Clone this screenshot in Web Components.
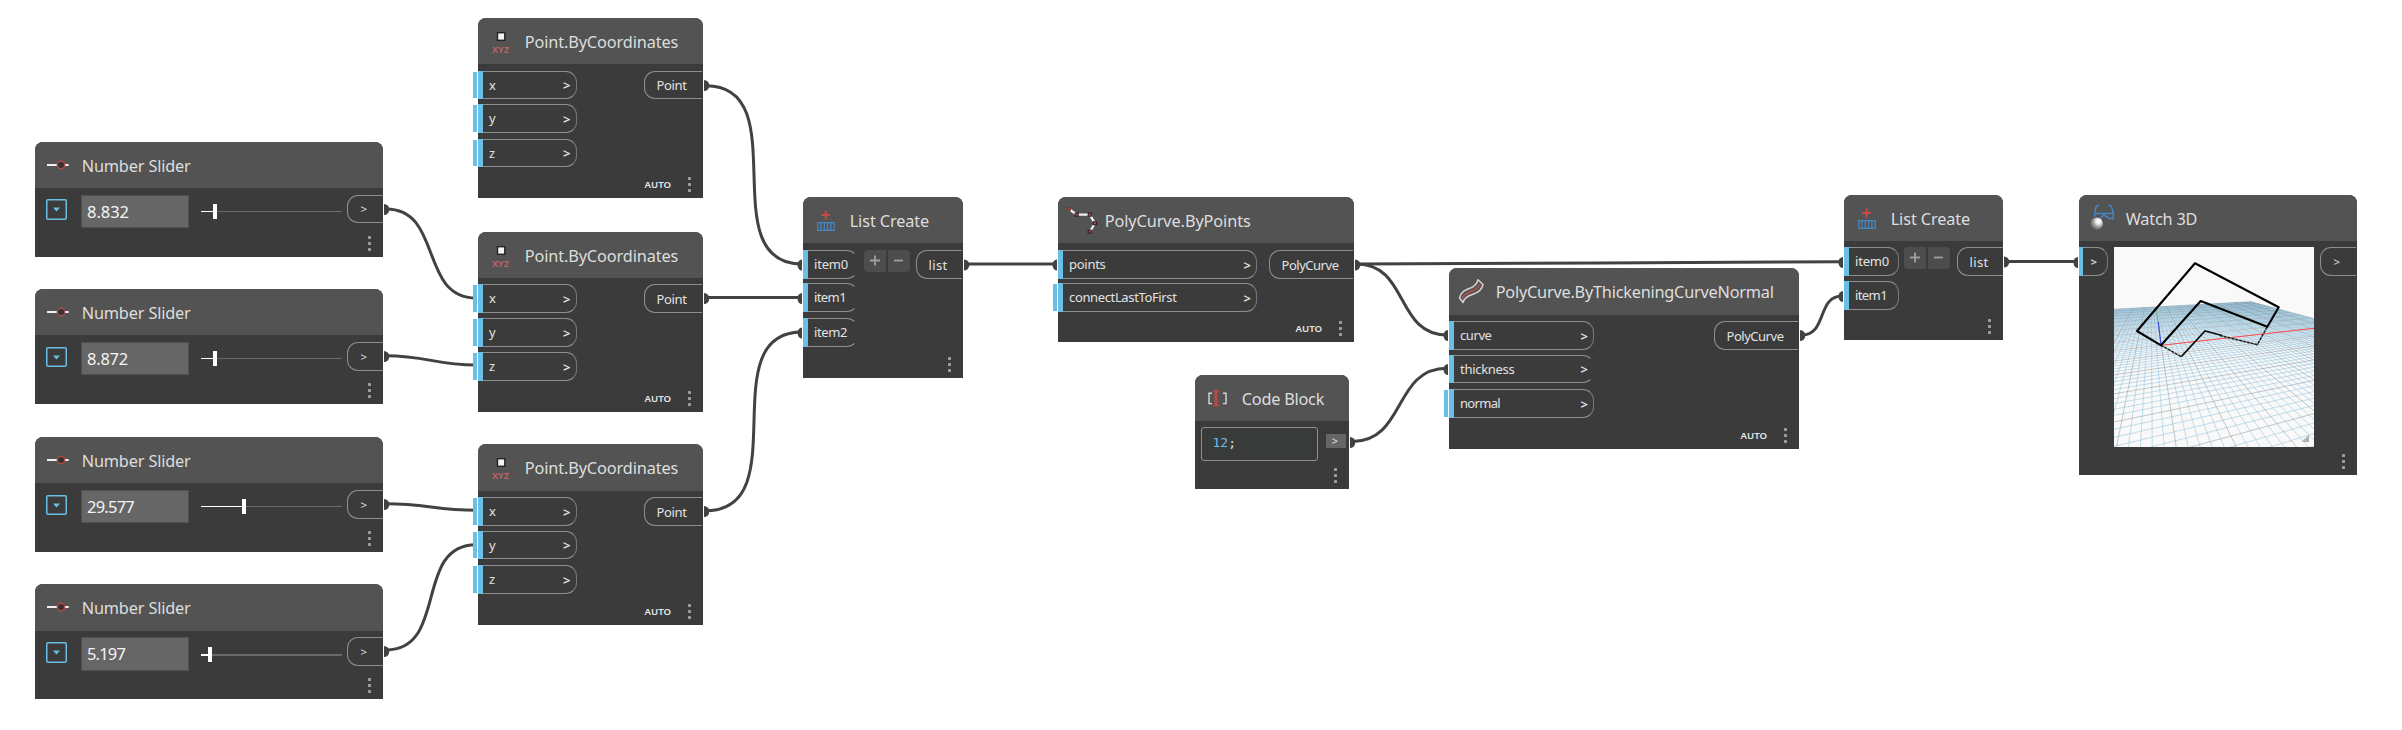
<!DOCTYPE html>
<html lang="en">
<head>
<meta charset="utf-8">
<title>Node graph</title>
<style>
html,body{margin:0;background:#fff;overflow:hidden}
body{width:2402px;height:730px;font-family:"Noto Sans","Open Sans",sans-serif;color:#e2e2e2}
</style>
</head>
<body>
<graph-canvas></graph-canvas>
<script>
// Text whose tracking is adjusted so that it takes a given width.
class FitText extends HTMLElement{
  connectedCallback(){
    const r=this.attachShadow({mode:'open'});
    r.innerHTML='<style>:host{display:inline-block;white-space:nowrap}span{display:inline-block}</style><span><slot></slot></span>';
    const w=+this.getAttribute('w'),n=this.textContent.length,s=r.querySelector('span');
    if(w){const d=(w-s.getBoundingClientRect().width)/n;s.style.letterSpacing=d.toFixed(3)+'px';}
  }
}
customElements.define('fit-text',FitText);

const ICONS={
 slider:'<path d="M12 23H33.7" stroke="#f0f0f0" stroke-width="2"/><circle cx="26" cy="23" r="3.7" fill="#3a3030" stroke="#b34a48" stroke-width="1.4"/>',
 xyz:'<rect x="19.5" y="14.7" width="7.3" height="7.6" fill="#f2f2f2" stroke="#222" stroke-width="1.4"/><text x="14" y="35" font-size="9.5" font-weight="700" fill="#b86462" textLength="17" lengthAdjust="spacingAndGlyphs">XYZ</text>',
 list:'<path d="M18.3 18H27M22.7 13.7V22.3" stroke="#c94a4a" stroke-width="2"/><path d="M14.8 25.7H31.2V33.3H14.8ZM18 25.7V33.3M21.3 25.7V33.3M24.6 25.7V33.3M27.9 25.7V33.3" fill="none" stroke="#4487c4" stroke-width="1.3"/>',
 poly:'<path d="M11 12L18.7 17.7H31.7L37 26.3L31.7 35" fill="none" stroke="#f2f2f2" stroke-width="2.2"/><g fill="#c2504e" stroke="#2b2020" stroke-width="1.1"><rect x="9.7" y="10.7" width="2.6" height="2.6" stroke="#6a3434"/><rect x="17.2" y="16.2" width="3" height="3"/><rect x="30.2" y="16.2" width="3" height="3"/><rect x="35.5" y="24.8" width="3" height="3"/><rect x="30.2" y="33.2" width="3" height="3"/></g>',
 code:'<path d="M17 18.2H14V28.6H17M28 18.2H31V28.6H28" fill="none" stroke="#d8d8d8" stroke-width="1.4"/><path d="M17.7 16H24.3M17.7 30.4H24.3" stroke="#b84845" stroke-width="1.6"/><path d="M21 16V30.4" stroke="#b84845" stroke-width="3"/>',
 thick:'<path d="M10.5 30C12 23.500 16 22 21.500 20C26 18.400 28 15.500 29 11.800L34 16.500C33 21.500 29.500 24.500 24 26.200C18 28 15 30 14 34.500Z" fill="#5a5252" stroke="#d0d0d0" stroke-width="1.5" stroke-linejoin="round"/><path d="M13 31C15 26 18 25 23 23C27 21.400 29.500 19 31 16" fill="none" stroke="#b04f4c" stroke-width="1.5"/>',
 watch:'<defs><radialGradient id="s" cx=".65" cy=".32" r=".75"><stop offset="0" stop-color="#fff"/><stop offset=".25" stop-color="#eee"/><stop offset=".6" stop-color="#999"/><stop offset="1" stop-color="#555"/></radialGradient></defs><path d="M20 10C17 10.500 16.500 12 16.300 15L15.500 22M29.500 10C32.500 10.500 33 12 33.300 14.500L34.300 18.500V23.500H30.500L25 20L21 23.500M15.800 18.600H34.300" fill="none" stroke="#4487c4" stroke-width="1.5"/><circle cx="17.700" cy="28.700" r="6.200" fill="url(#s)"/>'
};

// Node frame: title bar, input ports, middle content, output ports, footer.
class FlowNode extends HTMLElement{
  connectedCallback(){
    const a=n=>this.getAttribute(n);
    this.style.cssText=`left:${a('x')}px;top:${a('y')}px;width:${a('w')}px;height:${a('h')}px`;
    this.attachShadow({mode:'open'}).innerHTML=`<style>
    :host{position:absolute;display:flex;flex-direction:column;background:#3b3b3b;border-radius:8px 8px 0 0}
    header{height:${a('hh')||46}px;flex:none;background:#535353;border-radius:8px 8px 0 0;display:flex;align-items:center;font-size:16.3px;line-height:22px;color:#dedede}
    header svg{width:46px;height:46px;flex:none;align-self:flex-start}
    .t{padding-top:1px;margin-left:.7px}
    .body{flex:1;min-height:0;display:flex;align-items:flex-start}
    .in{flex:none;display:flex;flex-direction:column;align-items:flex-start}
    .out{margin-left:auto;flex:none}
    footer{height:15px;flex:none;margin-bottom:6px;display:flex;justify-content:flex-end;align-items:center;padding-right:12px;font-size:10.500px;font-weight:600;color:#e6e6e6}
    .dots{display:grid;gap:2.6px;margin-left:${a('auto')!==null?17:0}px}
    .dots i{width:3px;height:3px;background:#9c9c9c;border-radius:.6px}
    </style><header><svg viewBox="0 0 46 46">${ICONS[a('icon')]}</svg><fit-text class="t" w="${a('tw')}">${a('name')}</fit-text></header>
    <div class="body"><div class="in"><slot name="in"></slot></div><slot></slot><div class="out"><slot name="out"></slot></div></div>
    <footer>${a('auto')!==null?'<span>AUTO</span>':''}<span class="dots"><i></i><i></i><i></i></span></footer>`;
    const t=this.shadowRoot.querySelector('footer>span:first-child');
    if(a('auto')!==null){const w=t.getBoundingClientRect().width;t.style.fontSize=(10.5*26.5/w).toFixed(2)+'px';}
  }
}
customElements.define('flow-node',FlowNode);

class InPort extends HTMLElement{
  connectedCallback(){
    const a=n=>this.getAttribute(n),bar=a('bar')||5;
    this.attachShadow({mode:'open'}).innerHTML=`<style>
    :host{box-sizing:border-box;display:flex;align-items:center;position:relative;width:${a('w')}px;height:${a('h')||29}px;margin-top:${a('gap')}px;
      border:1px solid #8e8e8e;border-left:0;border-right-color:${a('open')!==null?'transparent':'#777'};border-radius:0 11px 11px 0;font-size:13px;line-height:16px}
    .bar{align-self:stretch;width:${bar}px;margin:-1px 0;background:#6abfe7;flex:none}
    .l{margin-left:${a('pad')||6}px;margin-top:-1px}
    .c{margin-left:auto;margin-right:5px;font-weight:600}
    .tab{position:absolute;left:-5px;top:0;width:4px;bottom:0;background:#6abfe7}
    </style><span class="bar"></span>${a('tab')!==null?'<span class="tab"></span>':''}${a('label')?`<fit-text class="l" w="${a('tw')||0}">${a('label')}</fit-text>`:''}${a('chev')!==null?`<span class="c" style="${a('chev')?`font-size:${a('chev')}px;margin-right:10px`:''}">&gt;</span>`:''}`;
  }
}
customElements.define('in-port',InPort);

class OutPort extends HTMLElement{
  connectedCallback(){
    const a=n=>this.getAttribute(n);
    this.attachShadow({mode:'open'}).innerHTML=`<style>
    :host{box-sizing:border-box;display:flex;align-items:center;width:${a('w')}px;height:${a('h')||29}px;margin:${a('gap')}px ${a('mr')||1}px 0 0;padding-left:${a('pad')||11.5}px;
      border:1px solid #8e8e8e;border-right:0;border-radius:11px 0 0 11px;font-size:${a('fs')||13}px;line-height:16px}
    </style><fit-text w="${a('tw')||0}">${a('label')}</fit-text>`;
  }
}
customElements.define('out-port',OutPort);

class NumberSlider extends HTMLElement{
  connectedCallback(){
    const a=n=>+this.getAttribute(n),th=a('th')||1,top=a('top')||7,d=a('d')||12;
    this.attachShadow({mode:'open'}).innerHTML=`<style>
    :host{display:flex;align-items:flex-start}
    .d{box-sizing:border-box;width:21px;height:${d==11?21:20}px;margin:${d}px 14px 0 11px;box-shadow:inset 0 0 0 1.500px #6abfe7;border-radius:2px;display:flex;align-items:center;justify-content:center}
    .d svg{width:7px;height:5px}
    .v{box-sizing:border-box;width:108px;height:${40-top}px;margin-top:${top}px;border:1px solid #505050;background:#666;color:#f4f4f4;font-size:16.5px;line-height:32px;padding-left:5px}
    .t{width:141px;height:15px;margin:16px 0 0 12px;display:flex;align-items:center}
    .f{height:${th}px;background:#fff;width:${a('pos')}px}
    .h{width:4px;height:15px;background:#fff}
    .r{height:${th}px;background:#6a6a6a;flex:1}
    </style><div class="d"><svg viewBox="0 0 7 5"><path d="M0 .5H7L3.500 4.500Z" fill="#6abfe7"/></svg></div>
    <div class="v"><fit-text w="${a('tw')}">${this.getAttribute('value')}</fit-text></div>
    <div class="t"><span class="f"></span><span class="h"></span><span class="r"></span></div>`;
  }
}
customElements.define('number-slider',NumberSlider);

class ListButtons extends HTMLElement{
  connectedCallback(){
    const g=this.getAttribute('gap')||7,m=this.getAttribute('ml')||6;
    this.attachShadow({mode:'open'}).innerHTML=`<style>
    :host{display:flex;gap:1.500px;margin:${g}px 0 0 ${m}px}
    span{width:22px;height:22px;background:#4d4d4d}
    span:first-of-type{border-radius:4px 0 0 4px}span:last-of-type{border-radius:0 4px 4px 0}
    svg{display:block}
    </style><span><svg width="22" height="22"><path d="M6 10.500H16M11 5.500V15.500" stroke="#a0a0a0" stroke-width="1.800"/></svg></span><span><svg width="22" height="22"><path d="M6 10.500H15" stroke="#a0a0a0" stroke-width="1.800"/></svg></span>`;
  }
}
customElements.define('list-buttons',ListButtons);

class CodeField extends HTMLElement{
  connectedCallback(){
    this.attachShadow({mode:'open'}).innerHTML=`<style>
    :host{display:flex;align-items:flex-start;flex:1}
    .b{box-sizing:border-box;width:117px;height:34px;margin:6px 0 0 6px;border:1px solid #8e8e8e;border-radius:3px;padding-left:10.5px;font:13px/29px "DejaVu Sans Mono",monospace;background:#393b3a}
    b{font-weight:400;color:#6abfe7}
    .p{width:20px;height:14px;margin:13px 0 0 8px;background:#666;font-size:11px;line-height:14px;text-align:center;text-indent:-2px}
    </style><div class="b"><b>12</b>;</div><div class="p">&gt;</div>`;
  }
}
customElements.define('code-field',CodeField);

// Perspective ground grid with axes and the resulting curves.
class View3D extends HTMLElement{
  connectedCallback(){
    const O=[47.3,98.3],X=[735,22],Y=[37,28],a=.035,b=.12,N=10;
    const P=(u,v)=>{const d=1+a*u+b*v;return[0,1].map(i=>((O[i]+u*a*X[i]+v*b*Y[i])/d).toFixed(2)).join(' ')};
    const lim=.08;let minor='',major='';
    for(let k=-N*5;k<=N*5;k++){
      const t=k/5;let s='';
      const v0=Math.max(-N,(lim-1-a*t)/b);s+=`M${P(t,v0)}L${P(t,N)}`;
      const u0=Math.max(-N,(lim-1-b*t)/a);if(u0<N)s+=`M${P(u0,t)}L${P(N,t)}`;
      if(k%5)minor+=s;else major+=s;
    }
    this.attachShadow({mode:'open'}).innerHTML=`<style>:host{display:block;width:200px;height:200px;margin:6px 0 0 6px;background:#f9f9f9}svg{display:block;overflow:hidden}</style>
    <svg width="200" height="200" fill="none">
    <path d="${minor}" stroke="#94c2dc" stroke-opacity=".55" stroke-width="1"/>
    <path d="${major}" stroke="#7f8f99" stroke-opacity=".6" stroke-width=".8"/>
    <path d="M47.300 98.300L200 81.300" stroke="#ff4a4a" stroke-width="1"/>
    <path d="M42.300 64L44.500 76" stroke="#6fae80" stroke-width=".9"/>
    <path d="M44.300 75L47 98.300" stroke="#3b4be0" stroke-width="1.200"/>
    <path d="M47 98.300L67.300 109.700M106 88.500L143.300 97.700L153.300 79.700" stroke="#777" stroke-width="1.300"/>
    <path d="M47 98.300L67.300 109.700M106 88.500L143.300 97.700L153.300 79.700" stroke="#222" stroke-width="1.400" stroke-dasharray="2.500 1.500"/>
    <path d="M67.300 109.700L91 84L108 88.500" stroke="#111" stroke-width="1.700"/>
    <path d="M23 84L81 16.300L164.700 60.300L153.300 79.700L86.700 54L47 98.300Z" stroke="#000" stroke-width="2.100" stroke-linejoin="round"/>
    <path d="M187.500 195L195 188V195Z" fill="#b0b0b0"/>
    </svg>`;
  }
}
customElements.define('view-3d',View3D);

class GraphCanvas extends HTMLElement{
  connectedCallback(){
    const wires=[[386,209,476,298],[386,355.700,476,365],[386,503.700,476,510.300],[386,650,476,544.700],
      [706,85.700,802,264],[706,297.500,802,297.500],[706,510.700,802,332],[966,264,1056,264],
      [1357,264,1843,261.800],[1357,264,1447,335],[1352,441.500,1447,368.300],[1802,335,1842,296],[2006,261.500,2077,261.500]];
    const W=wires.map(([x,y,X,Y])=>{
      const o=Math.abs(Y-y)<6?(X-x)/3:.45*Math.hypot(X-x,Y-y);
      return `<path d="M${x} ${y}C${x+o} ${y} ${X-o} ${Y} ${X} ${Y}"/>`}).join('');
    const R=[[384,209.500],[384,356.500],[384,504.500],[384,651.500],[704,85.500],[704,298.500],[704,511.500],[964,265],[1355,265],[1350,442.500],[1800,335.500],[2004,262]]
      .map(([x,y])=>`<path d="M${x} ${y-5.5}A5.300 5.500 0 0 1 ${x} ${y+5.500}Z"/>`).join('');
    const L=[[802,265],[802,298.500],[802,333],[1057,265],[1448,335.500],[1448,369.500],[1843,262.500],[1843,296.500],[2078,262.500]]
      .map(([x,y])=>`<path d="M${x} ${y-5.500}A4.500 5.500 0 0 0 ${x} ${y+5.500}Z"/>`).join('');
    const slider=(y,h,v,tw,pos,o={})=>`<flow-node x="35" y="${y}" w="348" h="115" hh="${o.hh||46}" icon="slider" name="Number Slider" tw="109">
      <number-slider value="${v}" tw="${tw}" pos="${pos}" top="${o.g||7}" d="${o.d||12}" th="${o.th||1}"></number-slider>
      <out-port slot="out" w="36" h="${h}" gap="${o.g||7}" mr="0" pad="12.500" fs="11.500" label="&gt;"></out-port></flow-node>`;
    const point=(y,h,hh,p)=>`<flow-node x="478" y="${y}" w="225" h="${h}" hh="${hh}" icon="xyz" name="Point.ByCoordinates" tw="153.500" auto>
      ${p.map(([g,ph],i)=>`<in-port slot="in" tab w="98.500" gap="${g}" h="${ph}" label="${'xyz'[i]}" chev></in-port>`).join('')}
      <out-port slot="out" w="58" gap="${p[0][0]}" h="${p[0][1]}" label="Point" tw="30"></out-port></flow-node>`;
    this.attachShadow({mode:'open'}).innerHTML=`<style>
    :host{display:block;position:relative;width:2402px;height:730px}
    .w{position:absolute;left:0;top:0}
    </style>
    <svg class="w" width="2402" height="730"><g fill="none" stroke="#424242" stroke-width="3">${W}</g><g fill="#424242">${R}${L}</g></svg>
    ${slider(142,28,'8.832',42,12,{d:11})}
    ${slider(289,29,'8.872',41,12)}
    ${slider(437,29,'29.577',47,41)}
    ${slider(584,29,'5.197',38,7,{hh:47,g:6,d:11,th:2})}
    ${point(18,180,46,[[7,28],[5,29],[6,28]])}
    ${point(232,180,46,[[6,29],[5,29],[5,29]])}
    ${point(444,181,47,[[6,29],[5,28],[6,29]])}
    <flow-node x="803" y="197" w="160" h="181" icon="list" name="List Create" tw="79.500">
      <in-port slot="in" open w="55" gap="7" label="item0" tw="34"></in-port>
      <in-port slot="in" open w="55" gap="4" label="item1" tw="32"></in-port>
      <in-port slot="in" open w="55" gap="6" label="item2" tw="33"></in-port>
      <list-buttons></list-buttons>
      <out-port slot="out" w="46" gap="7" label="list" tw="19"></out-port>
    </flow-node>
    <flow-node x="1058" y="197" w="296" h="145" icon="poly" name="PolyCurve.ByPoints" tw="146" auto>
      <in-port slot="in" w="199" gap="7" label="points" tw="36.500" chev></in-port>
      <in-port slot="in" tab w="199" gap="4" label="connectLastToFirst" tw="107.500" chev></in-port>
      <out-port slot="out" w="84" gap="7" label="PolyCurve" tw="57"></out-port>
    </flow-node>
    <flow-node x="1195" y="375" w="154" h="114" icon="code" name="Code Block" tw="82.500"><code-field></code-field></flow-node>
    <flow-node x="1449" y="268" w="350" h="181" hh="47" icon="thick" name="PolyCurve.ByThickeningCurveNormal" tw="278" auto>
      <in-port slot="in" w="145" gap="6" label="curve" tw="31.500" chev></in-port>
      <in-port slot="in" open w="145" gap="5" h="28" label="thickness" tw="54.500" chev></in-port>
      <in-port slot="in" tab w="145" gap="6" label="normal" tw="40" chev></in-port>
      <out-port slot="out" w="84" gap="6" label="PolyCurve" tw="57"></out-port>
    </flow-node>
    <flow-node x="1844" y="195" w="159" h="145" icon="list" name="List Create" tw="79.500">
      <in-port slot="in" w="55" gap="6" label="item0" tw="34"></in-port>
      <in-port slot="in" w="55" gap="5" label="item1" tw="32"></in-port>
      <list-buttons gap="6" ml="5"></list-buttons>
      <out-port slot="out" w="46" gap="6" mr="0" label="list" tw="19"></out-port>
    </flow-node>
    <flow-node x="2079" y="195" w="278" h="280" icon="watch" name="Watch 3D" tw="71.500">
      <in-port slot="in" bar="4" w="29" gap="6" chev="11.500"></in-port>
      <view-3d></view-3d>
      <out-port slot="out" w="36" gap="6" pad="12.500" fs="11.500" label="&gt;"></out-port>
    </flow-node>`;
  }
}
customElements.define('graph-canvas',GraphCanvas);
</script>
</body>
</html>
